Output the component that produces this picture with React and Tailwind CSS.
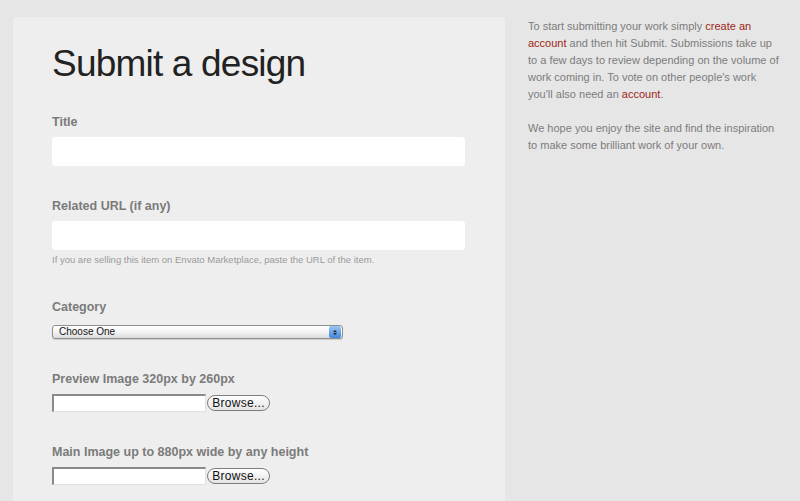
import React from 'react';

const Label = ({ children, className = '' }) => (
  <label className={`block text-[12.5px] leading-4 font-bold text-[#7b7b7b] ${className}`}>{children}</label>
);

const TextField = () => (
  <div className="h-[29px] w-[413px] rounded-[3px] bg-white" />
);

const FileField = () => (
  <div className="flex items-center h-[18px]">
    <div className="h-[18px] w-[154px] bg-white border-t-2 border-l-2 border-[#8a8a8a] border-r border-b border-r-[#e0e0e0] border-b-[#e0e0e0]" />
    <button
      type="button"
      className="ml-[1px] h-[16px] w-[63px] rounded-full border border-[#7d7d7d] bg-gradient-to-b from-white to-[#e4e4e4] text-[12px] leading-[14px] text-[#111] tracking-[0.3px]"
    >
      Browse...
    </button>
  </div>
);

const SelectField = () => (
  <div className="flex items-center h-[14px] w-[291px] rounded-[3px] border border-[#8f8f8f] bg-gradient-to-b from-white via-[#f4f4f4] to-[#dcdcdc] shadow-[0_1px_1px_rgba(0,0,0,0.15)]">
    <span className="flex-1 pl-[6px] text-[10px] leading-[12px] text-[#111]">Choose One</span>
    <span className="flex flex-col items-center justify-center w-[12px] h-[12px] mr-[1px] rounded-[2px] bg-gradient-to-b from-[#9cc6f4] to-[#3f86dc]">
      <span className="block w-0 h-0 border-l-[2px] border-r-[2px] border-b-[2px] border-l-transparent border-r-transparent border-b-[#222]" />
      <span className="block w-0 h-0 mt-[1px] border-l-[2px] border-r-[2px] border-t-[2px] border-l-transparent border-r-transparent border-t-[#222]" />
    </span>
  </div>
);

export default function App() {
  return (
    <div
      className="min-h-[501px] h-[501px] overflow-hidden bg-[#e6e6e6] flex pl-[13px] pt-[17px]"
      style={{ fontFamily: '"Liberation Sans", Arial, sans-serif' }}
    >
      {/* Form panel */}
      <div className="w-[492px] h-[520px] shrink-0 rounded-t-[4px] bg-[#eeeeee] pl-[39px] pt-[25px]">
        <h1 className="text-[37px] leading-[44px] tracking-[-0.8px] text-[#222]">Submit a design</h1>

        <div className="mt-[28px]">
          <Label className="mb-[7px]">Title</Label>
          <TextField />
        </div>

        <div className="mt-[32px]">
          <Label className="mb-[7px]">Related URL (if any)</Label>
          <TextField />
          <p className="mt-[3px] text-[9.5px] leading-[13px] text-[#9a9a9a]">
            If you are selling this item on Envato Marketplace, paste the URL of the item.
          </p>
        </div>

        <div className="mt-[33px]">
          <Label className="mb-[10px]">Category</Label>
          <SelectField />
        </div>

        <div className="mt-[32px]">
          <Label className="mb-[7px]">Preview Image 320px by 260px</Label>
          <FileField />
        </div>

        <div className="mt-[32px]">
          <Label className="mb-[7px]">Main Image up to 880px wide by any height</Label>
          <FileField />
        </div>
      </div>

      {/* Side copy */}
      <div className="ml-[23px] w-[253px] pt-[1px] text-[11px] leading-[17px] text-[#7c7c7c]">
        <p>
          To start submitting your work simply <a href="#" className="text-[#9e1f17]">create an account</a> and then hit Submit. Submissions take up to a few days to review depending on the volume of work coming in. To vote on other people's work you'll also need an <a href="#" className="text-[#9e1f17]">account</a>.
        </p>
        <p className="mt-[17px]">
          We hope you enjoy the site and find the inspiration to make some brilliant work of your own.
        </p>
      </div>
    </div>
  );
}
